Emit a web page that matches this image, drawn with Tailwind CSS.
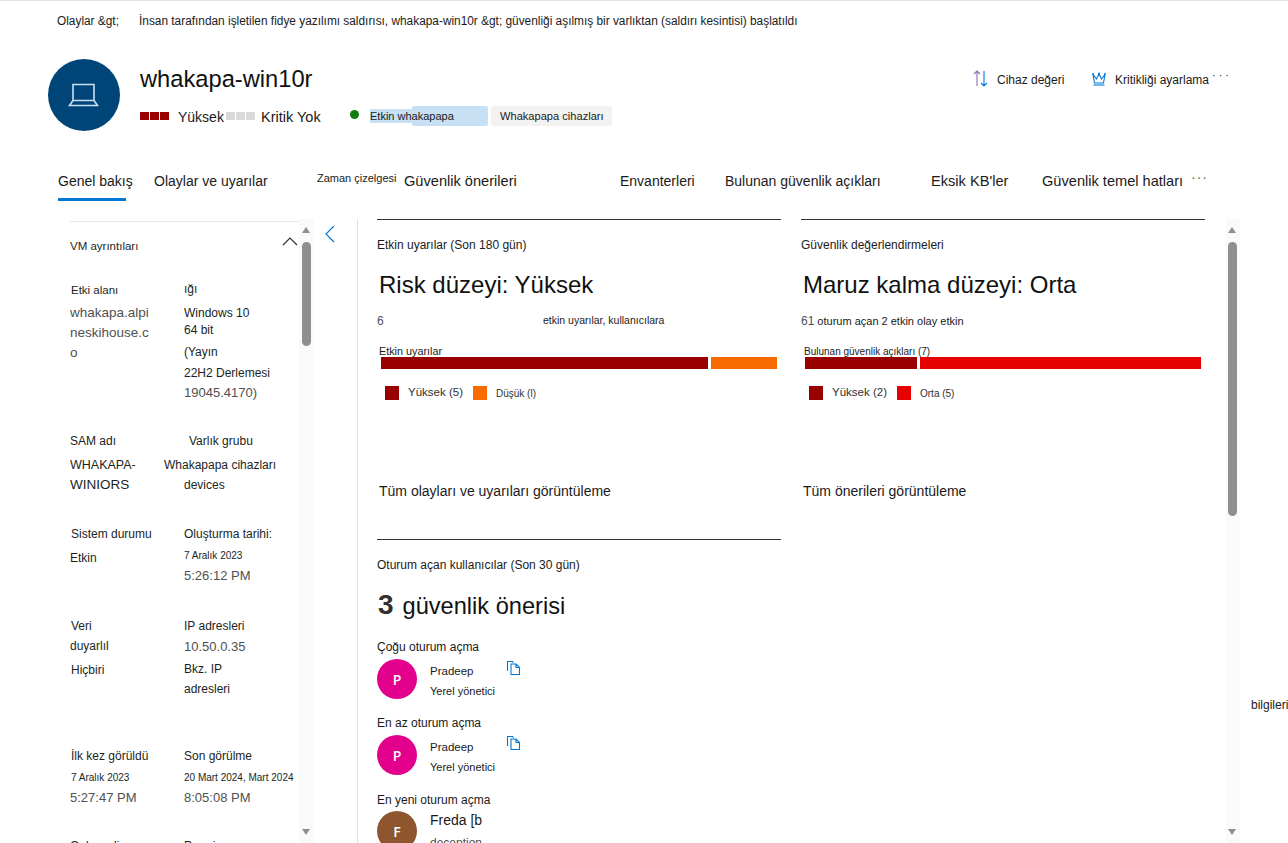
<!DOCTYPE html>
<html lang="tr">
<head>
  <meta charset="UTF-8" />
  <title>whakapa-win10r</title>
  <script src="https://cdn.jsdelivr.net/npm/@tailwindcss/browser@4"></script>
</head>
<body class="relative h-[843px] w-[1288px] overflow-hidden bg-white font-['Liberation_Sans',sans-serif] text-[12px] text-[#1b1a19]">

  <!-- breadcrumb -->
  <div class="flex h-[44px] items-center border-t border-[#e5e5e5] pb-[2px] pl-[57px] text-[11.860px]">
    <span class="w-[82px]">Olaylar &amp;gt;</span>
    <span>İnsan tarafından işletilen fidye yazılımı saldırısı, whakapa-win10r &amp;gt; güvenliği aşılmış bir varlıktan (saldırı kesintisi) başlatıldı</span>
  </div>

  <!-- device header -->
  <div class="mt-[15px] flex h-[72px] pl-[48px]">
    <div class="flex h-[72px] w-[72px] shrink-0 items-center justify-center rounded-full bg-[#004578]">
      <svg width="34" height="26" viewBox="0 0 34 26" fill="none" stroke="#c7e0f4" stroke-width="1.6">
        <path d="M6 2.500h21v16H6z" />
        <path d="M6 18.500 2.500 23.500h28l-3.500-5" />
      </svg>
    </div>
    <div class="ml-[20px] w-[828px]">
      <div class="h-[40px] text-[23.700px] leading-[40px] text-[#111]">whakapa-win10r</div>
      <div class="mt-[5px] flex h-[24px] items-center">
        <div class="flex gap-[1px]"><i class="h-[8px] w-[9px] bg-[#990000]"></i><i class="h-[8px] w-[9px] bg-[#990000]"></i><i class="h-[8px] w-[9px] bg-[#990000]"></i></div>
        <span class="ml-[9px] mt-[3px] w-[48px] text-[14px]">Yüksek</span>
        <div class="flex gap-[1px]"><i class="h-[8px] w-[9px] bg-[#d9d9d9]"></i><i class="h-[8px] w-[9px] bg-[#d9d9d9]"></i><i class="h-[8px] w-[9px] bg-[#d9d9d9]"></i></div>
        <span class="ml-[6px] mt-[3px] w-[89px] text-[14.500px]">Kritik Yok</span>
        <i class="mb-[4px] h-[9px] w-[9px] rounded-full bg-[#107c10]"></i>
        <div class="ml-[11px] flex items-center">
          <span class="relative z-10 h-[14px] w-[42px] whitespace-nowrap bg-[#c7e0f4] text-[11px] leading-[14px]">Etkin whakapapa</span>
          <span class="h-[20px] w-[76px] rounded-[2px] bg-[#c7e0f4]"></span>
        </div>
        <span class="ml-[3px] h-[20px] w-[121px] whitespace-nowrap rounded-[2px] bg-[#f3f2f1] pl-[9px] text-[11.100px] leading-[20px]">Whakapapa cihazları</span>
      </div>
    </div>
    <div class="mt-[8px] flex h-[24px] items-center">
      <svg class="ml-[5px]" width="16" height="20" viewBox="0 0 16 20" fill="none" stroke="#0078d4" stroke-width="1.1">
        <path d="M4 17V2M1 5l3-3 3 3" stroke="#8a6fb0" />
        <path d="M11 2v15M8 14l3 3 3-3" />
      </svg>
      <span class="ml-[8px] mt-[2px] w-[94px] text-[12px]">Cihaz değeri</span>
      <svg width="16" height="14" viewBox="0 0 16 14" fill="none" stroke="#0078d4" stroke-width="1.1">
        <path d="M2 2.500l1.500 8.500h9L14 2.500l-3.500 4.500L8 2 5.500 7z" />
        <path d="M2.500 13h11" />
        <circle cx="2" cy="2" r="1" fill="#0078d4" stroke="none" />
        <circle cx="8" cy="1.500" r="1" fill="#0078d4" stroke="none" />
        <circle cx="14" cy="2" r="1" fill="#0078d4" stroke="none" />
      </svg>
      <span class="ml-[8px] mt-[2px] whitespace-nowrap text-[12px]">Kritikliği ayarlama</span>
      <span class="mb-[8px] ml-[3px] text-[11px] leading-none tracking-[3px]">···</span>
    </div>
  </div>

  <!-- tabs -->
  <nav class="mt-[26px] flex h-[44px] text-[14px]">
    <a class="ml-[58px] h-[44px] w-[68px] whitespace-nowrap border-b-[3px] border-[#0078d4] pt-[14px]">Genel bakış</a>
    <a class="ml-[28px] w-[163px] whitespace-nowrap pt-[14px]">Olaylar ve uyarılar</a>
    <a class="w-[87px] whitespace-nowrap pt-[13px] text-[11px]">Zaman çizelgesi</a>
    <a class="w-[216px] whitespace-nowrap pt-[14px] text-[14.600px]">Güvenlik önerileri</a>
    <a class="w-[105px] whitespace-nowrap pt-[14px]">Envanterleri</a>
    <a class="w-[206px] whitespace-nowrap pt-[14px]">Bulunan güvenlik açıkları</a>
    <a class="w-[111px] whitespace-nowrap pt-[14px] text-[14.600px]">Eksik KB'ler</a>
    <a class="w-[149px] whitespace-nowrap pt-[14px] text-[14.600px]">Güvenlik temel hatları</a>
    <span class="pt-[10px] text-[#666] tracking-[1px]">···</span>
  </nav>

  <!-- body -->
  <div class="mt-[18px] flex h-[624px]">
    <!-- details panel -->
    <aside class="ml-[70px] mt-[2px] h-[622px] w-[228px] shrink-0 overflow-hidden border-t border-[#e5e5e5] text-[#201f1e]">
      <div class="relative flex h-[50px] items-center text-[11.500px]">
        VM ayrıntıları
        <svg class="absolute right-0 top-[14px]" width="16" height="10" viewBox="0 0 16 10" fill="none" stroke="#333" stroke-width="1.2"><path d="M1 9l7-7 7 7" /></svg>
      </div>
      <div class="grid grid-cols-[114px_114px] leading-[20px]">
        <div class="h-[159px]">
          <div class="mt-[8px] pl-[1px] text-[11.500px]">Etki alanı</div>
          <div class="mt-[3px] text-[13.500px] text-[#505050]"><div>whakapa.alpi</div><div>neskihouse.c</div><div>o</div></div>
        </div>
        <div class="h-[159px] whitespace-nowrap text-[12px] leading-[19.500px]">
          <div class="mt-[8px]">ığı</div>
          <div class="mt-[4px]">Windows 10</div>
          <div class="-mt-[2px]">64 bit</div>
          <div class="mt-[2px]">(Yayın</div>
          <div class="mt-[2px]">22H2 Derlemesi</div>
          <div class="-mt-[1px] text-[13px] text-[#505050]">19045.4170)</div>
        </div>

        <div class="h-[93px]">
          <div class="text-[12px]">SAM adı</div>
          <div class="mt-[4px] text-[12.500px]">WHAKAPA-</div>
          <div class="text-[13.500px]">WINIORS</div>
        </div>
        <div class="h-[93px] text-[12px]">
          <div class="pl-[5px]">Varlık grubu</div>
          <div class="-ml-[20px] mt-[4px] whitespace-nowrap">Whakapapa cihazları</div>
          <div>devices</div>
        </div>

        <div class="h-[92px]">
          <div class="pl-[1px] text-[12px]">Sistem durumu</div>
          <div class="mt-[4px] text-[12px]">Etkin</div>
        </div>
        <div class="h-[92px] text-[12px]">
          <div>Oluşturma tarihi:</div>
          <div class="mt-[2px] text-[10px]">7 Aralık 2023</div>
          <div class="text-[13px] text-[#505050]">5:26:12 PM</div>
        </div>

        <div class="h-[130px] text-[12px]">
          <div class="pl-[1px]">Veri</div>
          <div>duyarlıl</div>
          <div class="mt-[4px] pl-[1px]">Hiçbiri</div>
        </div>
        <div class="h-[130px] text-[12px]">
          <div>IP adresleri</div>
          <div class="text-[13px] leading-[22px] text-[#505050]">10.50.0.35</div>
          <div class="mt-[1px]">Bkz. IP</div>
          <div>adresleri</div>
        </div>

        <div class="h-[90px]">
          <div class="pl-[1px] text-[12px]">İlk kez görüldü</div>
          <div class="mt-[2px] pl-[1px] text-[10px]">7 Aralık 2023</div>
          <div class="text-[13px] text-[#505050]">5:27:47 PM</div>
        </div>
        <div class="h-[90px]">
          <div class="text-[12px]">Son görülme</div>
          <div class="mt-[2px] whitespace-nowrap text-[10px]">20 Mart 2024, Mart 2024</div>
          <div class="text-[13px] text-[#505050]">8:05:08 PM</div>
        </div>

        <div class="text-[12px]">Onboarding</div>
        <div class="text-[12px]">Premium</div>
      </div>
    </aside>

    <!-- panel scrollbar -->
    <div class="relative ml-[1px] h-[624px] w-[15px] bg-[#fafafa]">
      <i class="absolute left-[3px] top-[8px] h-0 w-0 border-x-[4.500px] border-b-[6px] border-x-transparent border-b-[#8f8f8f]"></i>
      <i class="absolute left-[3px] top-[23px] h-[104px] w-[9px] rounded-full bg-[#8f8f8f]"></i>
      <i class="absolute bottom-[8px] left-[3px] h-0 w-0 border-x-[4.500px] border-t-[6px] border-x-transparent border-t-[#8f8f8f]"></i>
    </div>

    <!-- collapse -->
    <div class="h-[624px] w-[44px] border-r border-[#e1e1e1] pl-[11px] pt-[6px]">
      <svg width="10" height="18" viewBox="0 0 10 18" fill="none" stroke="#0078d4" stroke-width="1.1"><path d="M9 1 1 9l8 8" /></svg>
    </div>

    <!-- main cards -->
    <main class="ml-[19px] grid h-[624px] w-[828px] shrink-0 grid-cols-[404px_404px] grid-rows-[320px_304px] gap-x-[20px] overflow-hidden">
      <section class="border-t border-[#333]">
        <p class="mt-[17px] text-[12px] leading-[16px]">Etkin uyarılar (Son 180 gün)</p>
        <h2 class="ml-[2px] mt-[15px] h-[34px] text-[24px] leading-[34px] text-[#111]">Risk düzeyi: Yüksek</h2>
        <div class="mt-[10px] flex h-[18px] items-center text-[10.500px]"><span class="w-[166px] text-[12px] text-[#505050]">6</span><span>etkin uyarılar, kullanıcılara</span></div>
        <div class="ml-[2px] mt-[15px] h-[12px] text-[10.800px] leading-[13px]">Etkin uyarılar</div>
        <div class="ml-[4px] flex h-[12px] w-[396px] gap-[3px]"><i class="w-[327px] bg-[#990000]"></i><i class="flex-1 bg-[#f76b00]"></i></div>
        <div class="ml-[8px] mt-[17px] flex h-[14px] items-center"><i class="h-[14px] w-[14px] bg-[#990000]"></i><span class="ml-[9px] w-[65px] text-[11.500px] text-[#323130]">Yüksek (5)</span><i class="h-[14px] w-[14px] bg-[#f76b00]"></i><span class="ml-[9px] text-[10px] text-[#323130]">Düşük (l)</span></div>
        <a class="ml-[2px] mt-[81px] block h-[20px] text-[14px] leading-[20px]">Tüm olayları ve uyarıları görüntüleme</a>
      </section>

      <section class="border-t border-[#333]">
        <p class="mt-[17px] text-[12px] leading-[16px]">Güvenlik değerlendirmeleri</p>
        <h2 class="ml-[2px] mt-[15px] h-[34px] text-[24px] leading-[34px] text-[#111]">Maruz kalma düzeyi: Orta</h2>
        <div class="mt-[10px] flex h-[18px] items-center gap-[3px] text-[11px]"><span class="text-[12px] text-[#505050]">61</span><span>oturum açan 2 etkin olay etkin</span></div>
        <div class="ml-[3px] mt-[15px] h-[12px] text-[10px] leading-[13px]">Bulunan güvenlik açıkları (7)</div>
        <div class="ml-[4px] flex h-[12px] w-[396px] gap-[3px]"><i class="w-[112px] bg-[#990000]"></i><i class="flex-1 bg-[#e60000]"></i></div>
        <div class="ml-[8px] mt-[17px] flex h-[14px] items-center"><i class="h-[14px] w-[14px] bg-[#990000]"></i><span class="ml-[9px] w-[65px] text-[11.500px] text-[#323130]">Yüksek (2)</span><i class="h-[14px] w-[14px] bg-[#e60000]"></i><span class="ml-[9px] text-[10px] text-[#323130]">Orta (5)</span></div>
        <a class="ml-[2px] mt-[81px] block h-[20px] text-[14px] leading-[20px]">Tüm önerileri görüntüleme</a>
      </section>

      <section class="border-t border-[#333]">
        <p class="mt-[17px] text-[12px] leading-[16px]">Oturum açan kullanıcılar (Son 30 gün)</p>
        <h2 class="mt-[15px] flex h-[34px] items-baseline text-[23.600px] leading-[34px] text-[#111]"><b class="ml-[1px] mr-[9px] text-[28px] font-bold text-[#323130]">3</b>güvenlik önerisi</h2>
        <p class="mt-[17px] text-[12px] leading-[16px]">Çoğu oturum açma</p>
        <div class="mt-[4px] flex h-[40px] items-start">
          <span class="flex h-[40px] w-[40px] items-center justify-center rounded-full bg-[#e3008c] font-['Open_Sans',sans-serif] text-[14px] font-semibold text-white">P</span>
          <div class="ml-[13px] w-[76px] whitespace-nowrap pt-[2px] leading-[20px]"><div class="text-[11.500px]">Pradeep</div><div class="text-[11px]">Yerel yönetici</div></div>
          <svg class="mt-[1px]" width="16" height="16" viewBox="0 0 16 16" fill="none" stroke="#0078d4" stroke-width="1.1"><path d="M1.500 11V1.500h5l1 1M5 4h5l3.500 3.500v7H5zM10 4v3.500h3.500" /></svg>
        </div>
        <p class="mt-[16px] text-[12px] leading-[16px]">En az oturum açma</p>
        <div class="mt-[4px] flex h-[40px] items-start">
          <span class="flex h-[40px] w-[40px] items-center justify-center rounded-full bg-[#e3008c] font-['Open_Sans',sans-serif] text-[14px] font-semibold text-white">P</span>
          <div class="ml-[13px] w-[76px] whitespace-nowrap pt-[2px] leading-[20px]"><div class="text-[11.500px]">Pradeep</div><div class="text-[11px]">Yerel yönetici</div></div>
          <svg width="16" height="16" viewBox="0 0 16 16" fill="none" stroke="#0078d4" stroke-width="1.1"><path d="M1.500 11V1.500h5l1 1M5 4h5l3.500 3.500v7H5zM10 4v3.500h3.500" /></svg>
        </div>
        <p class="mt-[17px] text-[12px] leading-[16px]">En yeni oturum açma</p>
        <div class="mt-[3px] flex items-start">
          <span class="flex h-[40px] w-[40px] items-center justify-center rounded-full bg-[#8e562e] font-['Open_Sans',sans-serif] text-[14px] font-semibold text-white">F</span>
          <div class="ml-[13px] whitespace-nowrap"><div class="-mt-[1px] text-[14px] leading-[20px]">Freda [b</div><div class="mt-[5px] text-[12px] leading-[16px] text-[#505050]">deception</div></div>
        </div>
      </section>
      <section></section>
    </main>

    <!-- page scrollbar -->
    <div class="relative ml-[21px] h-[624px] w-[14px] bg-[#fafafa]">
      <i class="absolute left-[2px] top-[8px] h-0 w-0 border-x-[4.500px] border-b-[6px] border-x-transparent border-b-[#8f8f8f]"></i>
      <i class="absolute left-[2px] top-[23px] h-[274px] w-[9px] rounded-full bg-[#8f8f8f]"></i>
      <i class="absolute bottom-[8px] left-[2px] h-0 w-0 border-x-[4.500px] border-t-[6px] border-x-transparent border-t-[#8f8f8f]"></i>
    </div>
  </div>

  <span class="absolute left-[1251px] top-[697px] text-[12px] leading-[16px]">bilgileri</span>
</body>
</html>
